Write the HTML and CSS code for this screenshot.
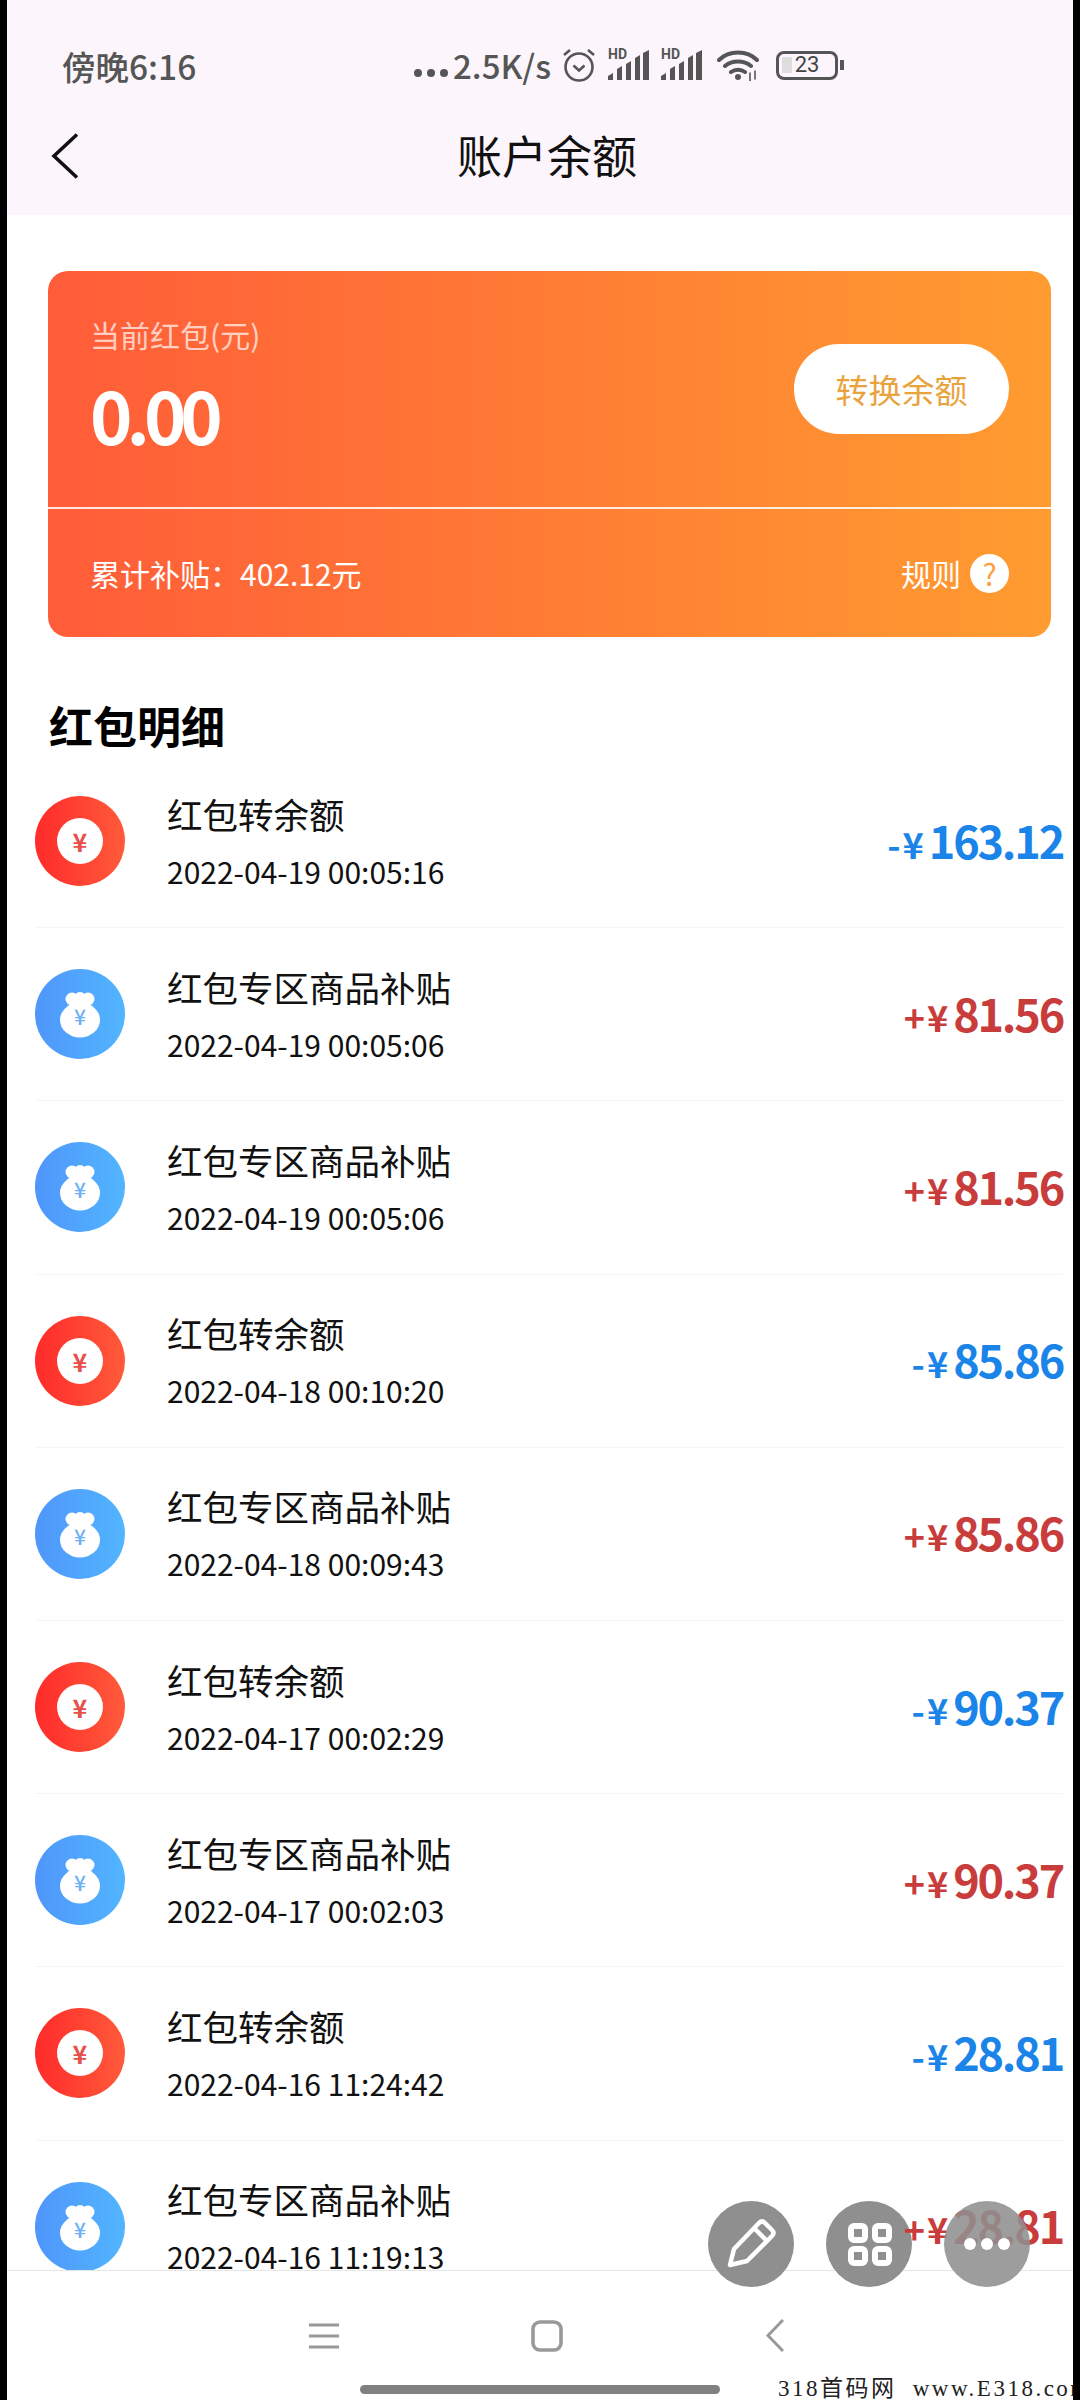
FILE: index.html
```html
<!DOCTYPE html>
<html lang="zh-CN">
<head>
  <meta charset="UTF-8">
  <meta name="viewport" content="width=device-width, initial-scale=1.0">
  <title>账户余额</title>
  <link rel="stylesheet" href="styles.css">
</head>
<body>
  <svg class="defs" width="0" height="0">
    <symbol id="bag" viewBox="0 0 90 90">
      <g fill="#fff">
        <circle cx="37" cy="30" r="6.500"/>
        <circle cx="53" cy="30" r="6.500"/>
        <circle cx="45" cy="29" r="6"/>
        <ellipse cx="45" cy="51" rx="20" ry="17.500"/>
      </g>
    </symbol>
    <symbol id="bars" viewBox="0 0 41 30">
      <path fill="#555" d="M0 30v-4l5-3v7zM9 30v-11l5-3v14zM18 30v-16l5-3v19zM27 30v-22l5-3v25zM35 30v-27l6-3v30z"/>
    </symbol>
  </svg>

  <div class="screen">
    <header class="top">
      <div class="status">
        <span class="time">傍晚6:16</span>
        <div class="status-right">
          <span class="dots"><i></i><i></i><i></i></span>
          <span class="speed">2.5K/s</span>
          <svg class="ic-alarm" width="34" height="36" viewBox="0 0 34 36" fill="none" stroke="#555" stroke-width="2.6">
            <circle cx="17" cy="20" r="13.5"/>
            <path d="M11.5 18.5l5.5 5 5.5-5M2 8l6-5M32 8l-6-5"/>
          </svg>
          <div class="signal"><svg width="41" height="30"><use href="#bars"/></svg><span>HD</span></div>
          <div class="signal"><svg width="41" height="30"><use href="#bars"/></svg><span>HD</span></div>
          <svg class="ic-wifi" width="42" height="32" viewBox="0 0 42 32" fill="none" stroke="#555" stroke-width="4" stroke-linecap="round">
            <path d="M2 11C12 1 30 1 40 11M8 17c7-6 19-6 26 0M14 23c4-3 10-3 14 0"/>
            <circle cx="21" cy="28" r="2" fill="#555" stroke-width="2"/>
            <path d="M33 24v8M38 22v8" stroke-width="1.6"/>
          </svg>
          <div class="battery">
            <div class="battery-body"><i class="battery-level"></i><span>23</span></div>
            <i class="battery-nub"></i>
          </div>
        </div>
      </div>
      <div class="titlebar">
        <svg class="back" width="28" height="46" viewBox="0 0 28 46" fill="none" stroke="#111" stroke-width="3.6"><path d="M26 1.500L3 23l23 21.500"/></svg>
        <h1>账户余额</h1>
      </div>
    </header>

    <section class="card">
      <div class="card-main">
        <div class="card-balance">
          <p class="card-label">当前红包(元)</p>
          <p class="card-amount">0.00</p>
        </div>
        <button class="convert">转换余额</button>
      </div>
      <div class="card-foot">
        <span>累计补贴：402.12元</span>
        <span class="rule">规则<b>?</b></span>
      </div>
    </section>

    <h2>红包明细</h2>

    <div class="list">
      <div class="row">
        <div class="icon red"><span class="coin">¥</span></div>
        <div class="info"><p class="name">红包转余额</p><p class="date">2022-04-19 00:05:16</p></div>
        <div class="amount out"><span class="sym">-¥</span>163.12</div>
      </div>
      <div class="row">
        <div class="icon blue"><svg width="90" height="90"><use href="#bag"/></svg><span class="bag-mark">¥</span></div>
        <div class="info"><p class="name">红包专区商品补贴</p><p class="date">2022-04-19 00:05:06</p></div>
        <div class="amount in"><span class="sym">+¥</span>81.56</div>
      </div>
      <div class="row">
        <div class="icon blue"><svg width="90" height="90"><use href="#bag"/></svg><span class="bag-mark">¥</span></div>
        <div class="info"><p class="name">红包专区商品补贴</p><p class="date">2022-04-19 00:05:06</p></div>
        <div class="amount in"><span class="sym">+¥</span>81.56</div>
      </div>
      <div class="row">
        <div class="icon red"><span class="coin">¥</span></div>
        <div class="info"><p class="name">红包转余额</p><p class="date">2022-04-18 00:10:20</p></div>
        <div class="amount out"><span class="sym">-¥</span>85.86</div>
      </div>
      <div class="row">
        <div class="icon blue"><svg width="90" height="90"><use href="#bag"/></svg><span class="bag-mark">¥</span></div>
        <div class="info"><p class="name">红包专区商品补贴</p><p class="date">2022-04-18 00:09:43</p></div>
        <div class="amount in"><span class="sym">+¥</span>85.86</div>
      </div>
      <div class="row">
        <div class="icon red"><span class="coin">¥</span></div>
        <div class="info"><p class="name">红包转余额</p><p class="date">2022-04-17 00:02:29</p></div>
        <div class="amount out"><span class="sym">-¥</span>90.37</div>
      </div>
      <div class="row">
        <div class="icon blue"><svg width="90" height="90"><use href="#bag"/></svg><span class="bag-mark">¥</span></div>
        <div class="info"><p class="name">红包专区商品补贴</p><p class="date">2022-04-17 00:02:03</p></div>
        <div class="amount in"><span class="sym">+¥</span>90.37</div>
      </div>
      <div class="row">
        <div class="icon red"><span class="coin">¥</span></div>
        <div class="info"><p class="name">红包转余额</p><p class="date">2022-04-16 11:24:42</p></div>
        <div class="amount out"><span class="sym">-¥</span>28.81</div>
      </div>
      <div class="row">
        <div class="icon blue"><svg width="90" height="90"><use href="#bag"/></svg><span class="bag-mark">¥</span></div>
        <div class="info"><p class="name">红包专区商品补贴</p><p class="date">2022-04-16 11:19:13</p></div>
        <div class="amount in"><span class="sym">+¥</span>28.81</div>
      </div>
    </div>

    <div class="fabs">
      <div class="fab">
        <svg width="86" height="86" viewBox="0 0 86 86" fill="none" stroke="#fff" stroke-width="4.500" stroke-linejoin="round">
          <path d="M22 64l4-16 25-26c2-2 4-2 6 0l7 7c2 2 2 4 0 6L39 60z"/>
          <path d="M46 27l13 13"/>
        </svg>
      </div>
      <div class="fab">
        <svg width="86" height="86" viewBox="0 0 86 86" fill="none" stroke="#fff" stroke-width="6">
          <rect x="25" y="25" width="14" height="14" rx="3"/>
          <rect x="49" y="25" width="14" height="14" rx="3"/>
          <rect x="25" y="48" width="14" height="14" rx="3"/>
          <rect x="49" y="48" width="14" height="14" rx="3"/>
        </svg>
      </div>
      <div class="fab fab-top">
        <svg width="86" height="86" viewBox="0 0 86 86" fill="#fff">
          <circle cx="26" cy="43" r="6"/><circle cx="43" cy="43" r="6"/><circle cx="60" cy="43" r="6"/>
        </svg>
      </div>
    </div>

    <nav class="bottom">
      <div class="keys">
        <svg width="30" height="26" viewBox="0 0 30 26" stroke="#999" stroke-width="3"><path d="M0 2h30M0 13h30M0 24h30"/></svg>
        <svg width="32" height="32" viewBox="0 0 32 32" fill="none" stroke="#999" stroke-width="3.600"><rect x="2" y="2" width="28" height="28" rx="7"/></svg>
        <svg width="18" height="33" viewBox="0 0 18 33" fill="none" stroke="#999" stroke-width="3"><path d="M17 1L2 16.500 17 32"/></svg>
      </div>
      <div class="pill"></div>
    </nav>

    <div class="watermark">318首码网 www.E318.com</div>
  </div>
</body>
</html>
```

FILE: styles.css
```css
* {
  box-sizing: border-box;
}
body {
  margin: 0;
  width: 1080px;
  height: 2400px;
  overflow: hidden;
  background-color: #000;
  font-family: "Noto Sans CJK SC", "Noto Sans", sans-serif;
}
p, h1, h2 {
  margin: 0;
}
.defs {
  position: absolute;
}
.screen {
  position: relative;
  display: flex;
  flex-direction: column;
  width: 1066px;
  height: 2400px;
  margin: 0 7px;
  overflow: hidden;
  background-color: #fff;
}

/* top */
.top {
  flex: none;
  height: 215px;
  padding-top: 40px;
  background-color: #fcf5fc;
}
.status {
  display: flex;
  align-items: center;
  height: 50px;
  padding-left: 55px;
  color: #555;
}
.time {
  width: 135px;
  font-size: 33.500px;
  font-weight: 500;
  white-space: nowrap;
}
.status-right {
  display: flex;
  align-items: center;
  margin-left: 217px;
}
.dots {
  display: flex;
  gap: 5px;
  margin-top: 16px;
}
.dots i {
  width: 8px;
  height: 8px;
  border-radius: 50%;
  background-color: #555;
}
.speed {
  margin-left: 5px;
  font-size: 33px;
  font-weight: 500;
  line-height: 40px;
}
.ic-alarm {
  margin-left: 11px;
}
.signal {
  position: relative;
  width: 41px;
  height: 30px;
  margin-left: 12px;
}
.signal svg {
  display: block;
}
.signal span {
  position: absolute;
  left: 0;
  top: -3px;
  font-family: "Roboto", sans-serif;
  font-size: 14px;
  font-weight: 700;
  line-height: 14px;
}
.ic-wifi {
  margin-left: 15px;
}
.battery {
  display: flex;
  align-items: center;
  margin-left: 17px;
}
.battery-body {
  position: relative;
  width: 62px;
  height: 29px;
  border: 3.5px solid #555;
  border-radius: 8px;
  text-align: center;
  font-family: "Roboto", sans-serif;
  font-size: 22px;
  line-height: 22px;
  color: #444;
}
.battery-level {
  position: absolute;
  left: 3px;
  top: 3px;
  width: 10px;
  height: 16px;
  background-color: #ddd;
}
.battery-body span {
  position: relative;
}
.battery-nub {
  width: 4px;
  height: 10px;
  margin-left: 2px;
  background-color: #555;
}
.titlebar {
  position: relative;
  display: flex;
  align-items: center;
  justify-content: center;
  height: 90px;
  margin-top: 20px;
  padding-left: 14px;
}
.back {
  position: absolute;
  left: 44px;
  top: 23px;
}
h1 {
  font-size: 45px;
  font-weight: 400;
  line-height: 60px;
  color: #111;
}

/* card */
.card {
  flex: none;
  width: 1003px;
  height: 366px;
  margin: 56px 0 0 41px;
  border-radius: 20px;
  background: linear-gradient(90deg, #ff5c39, #ff9c30);
  color: #fff;
}
.card-main {
  display: flex;
  align-items: center;
  justify-content: space-between;
  height: 238px;
  padding: 0 42px;
  border-bottom: 2px solid rgba(255,255,255,0.85);
}
.card-balance {
  margin-bottom: 10px;
}
.card-label {
  font-size: 30px;
  line-height: 44px;
  color: rgba(255,255,255,0.7);
}
.card-amount {
  margin-top: 16px;
  font-size: 72px;
  font-weight: 700;
  line-height: 84px;
  letter-spacing: -6px;
}
.convert {
  width: 215px;
  height: 90px;
  padding: 0;
  border: none;
  border-radius: 45px;
  background-color: #fff;
  font-family: inherit;
  font-size: 33px;
  color: #e8a33d;
}
.card-foot {
  display: flex;
  align-items: center;
  justify-content: space-between;
  height: 128px;
  padding: 0 42px;
  font-size: 30px;
}
.rule {
  display: flex;
  align-items: center;
  gap: 9px;
}
.rule b {
  width: 39px;
  height: 39px;
  border-radius: 50%;
  background-color: #fff;
  font-size: 30px;
  font-weight: 400;
  line-height: 39px;
  text-align: center;
  color: #ffa040;
}

h2 {
  flex: none;
  height: 60px;
  margin: 58px 0 0 42px;
  font-size: 44px;
  font-weight: 700;
  line-height: 60px;
  color: #000;
}

/* list */
.list {
  flex: 1;
  min-height: 0;
  overflow: hidden;
  padding: 0 10px 0 28px;
}
.row {
  display: flex;
  align-items: center;
  height: 173.2px;
  border-bottom: 1px solid #f5f5f5;
}
.icon {
  position: relative;
  display: flex;
  flex: none;
  align-items: center;
  justify-content: center;
  width: 90px;
  height: 90px;
  border-radius: 50%;
}
.icon.red {
  background: linear-gradient(90deg, #ff2b2b, #ff5a3a);
}
.icon.blue {
  background: linear-gradient(90deg, #4f96fb, #52b5ff);
}
.coin {
  width: 46px;
  height: 46px;
  border-radius: 50%;
  background-color: #fff;
  font-size: 25px;
  font-weight: 700;
  line-height: 46px;
  text-align: center;
  color: #e8504a;
}
.bag-mark {
  position: absolute;
  left: 0;
  right: 0;
  top: 32px;
  font-size: 21px;
  font-weight: 500;
  line-height: 30px;
  text-align: center;
  color: #6cb0f5;
}
.info {
  flex: 1;
  margin: 0 0 1px 42px;
}
.name {
  font-size: 35.500px;
  line-height: 50px;
  color: #111;
}
.date {
  margin-top: 10px;
  font-size: 30px;
  line-height: 44px;
  color: #111;
}
.amount {
  position: relative;
  z-index: 2;
  font-size: 45px;
  font-weight: 700;
  line-height: 60px;
  letter-spacing: -2.200px;
}
.amount.out {
  color: #1a84e8;
}
.amount.in {
  color: #c93c3c;
}
.sym {
  margin-right: 3px;
  font-size: 36px;
  letter-spacing: 2px;
}

/* floating buttons */
.fabs {
  position: absolute;
  left: 701px;
  top: 2201px;
  display: flex;
  gap: 32px;
}
.fab {
  position: relative;
  z-index: 1;
  width: 86px;
  height: 86px;
  border-radius: 50%;
  background-color: #8f8f8f;
}
.fab-top {
  z-index: 3;
  background-color: rgba(143,143,143,0.88);
}

/* bottom keys */
.bottom {
  flex: none;
  height: 130px;
  padding-top: 48px;
  border-top: 1px solid #e6e6e6;
  background-color: #fff;
}
.keys {
  display: grid;
  grid-template-columns: 222px 235px auto;
  align-items: center;
  justify-content: start;
  height: 33px;
  padding-left: 302px;
}
.pill {
  width: 360px;
  height: 9px;
  margin: 33px 0 0 353px;
  border-radius: 5px;
  background-color: #808080;
}
.watermark {
  position: absolute;
  left: 771px;
  top: 2375px;
  font-family: "Liberation Serif", "Noto Sans CJK SC", serif;
  font-size: 23px;
  line-height: 28px;
  letter-spacing: 2.500px;
  word-spacing: 8px;
  white-space: nowrap;
  color: #222;
}
```
